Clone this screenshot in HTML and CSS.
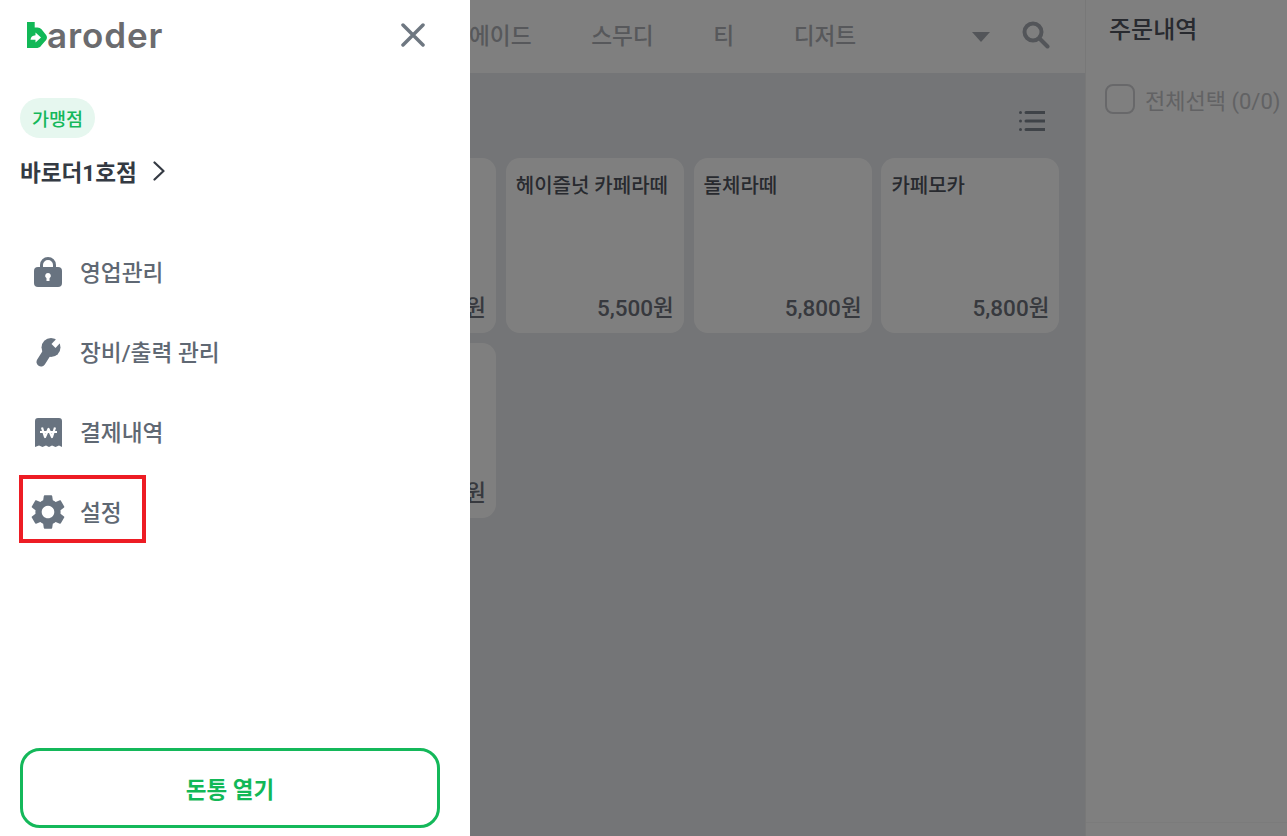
FILE: index.html
```html
<!DOCTYPE html>
<html lang="ko">
<head>
  <meta charset="UTF-8" />
  <meta name="viewport" content="width=device-width, initial-scale=1.0"/>
  <title>baroder POS</title>
  <link rel="stylesheet" href="styles.css">
</head>
<body>

  <div class="app">
    <main class="menu">
      <div class="topbar">
        <div class="tabs">
          <a href="#">에이드</a>
          <a href="#">스무디</a>
          <a href="#">티</a>
          <a href="#">디저트</a>
        </div>
        <div class="topbar-tools">
          <svg class="tab-caret" viewBox="0 0 18 10"><path d="M0 0h18l-9 10z"/></svg>
          <svg class="search-icon" viewBox="0 0 28 28"><circle cx="11" cy="11" r="8.5"/><path d="M17.5 17.5l8 8"/></svg>
        </div>
      </div>

      <div class="toolbar">
        <svg class="list-icon" viewBox="0 0 26 22">
          <circle cx="1.5" cy="2.5" r="1.5"/><circle cx="1.5" cy="11" r="1.5"/><circle cx="1.5" cy="19.5" r="1.5"/>
          <path d="M7 2.5h19M7 11h19M7 19.5h19"/>
        </svg>
      </div>

      <div class="grid">
        <div class="card"><div class="card-name"></div><div class="card-price">5,500원</div></div>
        <div class="card"><div class="card-name">헤이즐넛 카페라떼</div><div class="card-price">5,500원</div></div>
        <div class="card"><div class="card-name">돌체라떼</div><div class="card-price">5,800원</div></div>
        <div class="card"><div class="card-name">카페모카</div><div class="card-price">5,800원</div></div>
        <div class="card"><div class="card-name"></div><div class="card-price">5,800원</div></div>
      </div>
    </main>

    <aside class="orders">
      <h2>주문내역</h2>
      <label class="select-all"><span class="checkbox"></span>전체선택 (0/0)</label>
      <div class="orders-foot"></div>
    </aside>
  </div>

  <div class="scrim"></div>

  <nav class="drawer">
    <div class="drawer-head">
      <div class="logo">
        <svg class="logo-mark" viewBox="0 0 20 26">
          <path d="M0 0h7.700v5.500H10.500q2.500 0 4 1.800l4.600 5.700q1.700 2.500 0 5l-4.600 5.200q-1.500 2.800-4 2.800H0z"/>
          <path class="logo-arrow" d="M8.500 10.500l5.500 5-5.500 5v-2.700H3.500q.3-4.300 5-4.600z"/>
        </svg>
        <span>aroder</span>
      </div>
      <svg class="close-icon" viewBox="0 0 24 24"><path d="M2 2l20 20M22 2L2 22"/></svg>
    </div>

    <span class="badge">가맹점</span>
    <a class="store" href="#">바로더1호점
      <svg viewBox="0 0 12 20"><path d="M1.500 1.500l9 8.500-9 8.500"/></svg>
    </a>

    <div class="nav-list">
      <a class="nav-item" href="#">
        <span class="nav-icon">
          <svg width="28" height="30" viewBox="0 0 28 30">
            <path class="shackle" d="M7.500 12V8a6.500 6.500 0 0 1 13 0v4"/>
            <path d="M4 10h20q4 0 4 4v12q0 4-4 4H4q-4 0-4-4V14q0-4 4-4z"/>
            <path class="cut" d="M14 16a2.800 2.800 0 0 1 1.500 5.200V24h-3v-2.800A2.800 2.800 0 0 1 14 16z"/>
          </svg>
        </span>
        <span class="nav-label">영업관리</span>
      </a>
      <a class="nav-item" href="#">
        <span class="nav-icon">
          <svg width="25" height="29" viewBox="0 0 25 29">
            <path class="wrench-handle" d="M5 24L12 13"/>
            <circle cx="15" cy="9.500" r="9.500"/>
            <path class="wrench-notch" d="M17.500 8L24.500 .5"/>
          </svg>
        </span>
        <span class="nav-label">장비/출력 관리</span>
      </a>
      <a class="nav-item" href="#">
        <span class="nav-icon">
          <svg width="27" height="29" viewBox="0 0 27 29">
            <path d="M3 0h21q3 0 3 3v26l-3-1.500-3.500 1.500-3.500-1.500-3 1.500-3-1.500-3.500 1.500L4 27.500 0 29V3q0-3 3-3z"/>
            <path class="won" d="M5 14h17M7 9.500L10 19l3.500-8 3.500 8 3-9.500"/>
          </svg>
        </span>
        <span class="nav-label">결제내역</span>
      </a>
      <a class="nav-item nav-item-marked" href="#">
        <span class="nav-icon">
          <svg width="42" height="42" viewBox="0 0 24 24">
            <path d="M19.140 12.940c.04-.3.06-.61.06-.94 0-.32-.02-.64-.07-.94l2.030-1.580c.18-.14.23-.41.12-.61l-1.920-3.320c-.12-.22-.37-.29-.59-.22l-2.390.96c-.5-.38-1.030-.7-1.620-.94l-.36-2.540c-.04-.24-.24-.41-.48-.41h-3.840c-.24 0-.43.17-.47.41l-.36 2.540c-.59.24-1.130.57-1.620.94l-2.390-.96c-.22-.08-.47 0-.59.22L2.740 8.870c-.12.21-.08.47.12.61l2.030 1.580c-.05.3-.09.63-.09.94s.02.64.07.94l-2.030 1.580c-.18.14-.23.41-.12.61l1.920 3.320c.12.22.37.29.59.22l2.390-.96c.5.38 1.030.7 1.620.94l.36 2.540c.05.24.24.41.48.41h3.840c.24 0 .44-.17.47-.41l.36-2.540c.59-.24 1.130-.56 1.620-.94l2.390.96c.22.08.47 0 .59-.22l1.920-3.320c.12-.22.07-.47-.12-.61l-2.010-1.580zM12 15.600c-1.980 0-3.600-1.620-3.600-3.600s1.620-3.600 3.600-3.600 3.600 1.620 3.600 3.600-1.620 3.600-3.600 3.600z"/>
          </svg>
        </span>
        <span class="nav-label">설정</span>
      </a>
    </div>

    <button class="cash-btn" type="button">돈통 열기</button>
  </nav>

</body>
</html>
```

FILE: styles.css
```css
*, *::after {
  box-sizing: border-box;
}

html, body {
  height: 100%;
}

body {
  margin: 0;
  overflow: hidden;
  font-family: Roboto, "Noto Sans CJK KR", sans-serif;
  background-color: #ffffff;
}

a {
  text-decoration: none;
  color: inherit;
}

.app {
  display: flex;
  height: 100%;
}

/* menu area behind the drawer */
.menu {
  flex: 0 0 1085px;
  background-color: #e8eaee;
}

.topbar {
  display: flex;
  justify-content: space-between;
  align-items: center;
  height: 73px;
  padding: 0 35px 4px 469px;
  background-color: #ffffff;
}

.tabs {
  display: flex;
  gap: 59.500px;
  font-size: 22.700px;
  font-weight: 500;
  color: #aeb1b6;
}

.topbar-tools {
  display: flex;
  align-items: center;
  gap: 32px;
}

.tab-caret {
  width: 18px;
  height: 10px;
  margin-top: 4px;
  fill: #a6abb2;
}

.search-icon {
  width: 28px;
  height: 28px;
  fill: none;
  stroke: #a6abb2;
  stroke-width: 4;
  stroke-linecap: round;
}

.toolbar {
  display: flex;
  justify-content: flex-end;
  height: 85px;
  padding: 37px 40px 0 0;
}

.list-icon {
  width: 26px;
  height: 22px;
  fill: #7f8791;
  stroke: none;
}

.list-icon path {
  fill: none;
  stroke: #7f8791;
  stroke-width: 3;
  stroke-linecap: round;
}

.grid {
  display: grid;
  grid-template-columns: repeat(4, 178px);
  gap: 10px 9.8px;
  padding-left: 318px;
}

.card {
  display: flex;
  flex-direction: column;
  justify-content: space-between;
  height: 175px;
  padding: 12px 10px 11px;
  border-radius: 14px;
  background-color: #ffffff;
}

.card-name {
  font-size: 20px;
  font-weight: 500;
  color: #50545e;
}

.card-price {
  text-align: right;
  font-size: 22.5px;
  font-weight: 500;
  color: #6e727c;
}

/* order list on the right */
.orders {
  flex: 1;
  display: flex;
  flex-direction: column;
  padding: 10px 0 0 23px;
  border-left: 1px solid #f0f0f0;
  background-color: #ffffff;
}

.orders h2 {
  margin: 0 0 38px;
  font-size: 24px;
  font-weight: 500;
  color: #50545e;
}

.select-all {
  display: flex;
  align-items: center;
  gap: 10px;
  white-space: nowrap;
  font-size: 22px;
  color: #c4c5c8;
}

.checkbox {
  width: 30px;
  height: 30px;
  margin-left: -4px;
  border: 2px solid #d0d1d4;
  border-radius: 8px;
}

.orders-foot {
  height: 14px;
  margin: auto 0 0 -23px;
  border-top: 1px solid #f6f6f6;
}

.scrim {
  position: absolute;
  inset: 0;
  background-color: rgba(0, 0, 0, 0.5);
}

/* left drawer */
.drawer {
  position: absolute;
  top: 0;
  left: 0;
  bottom: 0;
  display: flex;
  flex-direction: column;
  align-items: flex-start;
  width: 470px;
  padding: 0 30px 8px 20px;
  background-color: #ffffff;
}

.drawer-head {
  display: flex;
  justify-content: space-between;
  align-items: center;
  align-self: stretch;
  height: 70px;
  margin-bottom: 28px;
  padding: 0 15px 0 7px;
}

.logo {
  display: flex;
  align-items: flex-end;
  height: 26px;
  font-family: Inter, sans-serif;
  font-size: 35px;
  font-weight: 600;
  line-height: 26px;
  letter-spacing: 0.9px;
  color: #6b6b6e;
}

.logo-mark {
  flex: none;
  width: 20px;
  height: 26px;
  fill: #12b857;
}

.logo-arrow {
  fill: #ffffff;
}

.close-icon {
  width: 24px;
  height: 24px;
  fill: none;
  stroke: #6e7781;
  stroke-width: 3.500;
  stroke-linecap: round;
}

.badge {
  display: flex;
  align-items: center;
  justify-content: center;
  width: 75px;
  height: 40px;
  border-radius: 20px;
  background-color: #e6f7ef;
  font-size: 18.500px;
  font-weight: 500;
  color: #14b85a;
}

.store {
  display: flex;
  align-items: center;
  gap: 16px;
  height: 32px;
  margin-top: 17px;
  margin-bottom: 1px;
  font-size: 22.600px;
  font-weight: 700;
  color: #343a43;
}

.store svg {
  width: 12px;
  height: 20px;
  fill: none;
  stroke: #343a43;
  stroke-width: 2.200;
  stroke-linecap: round;
  stroke-linejoin: round;
}

.nav-list {
  display: flex;
  flex-direction: column;
  margin-top: 44px;
}

.nav-item {
  position: relative;
  display: flex;
  align-items: center;
  gap: 4px;
  height: 80px;
  font-size: 22.700px;
  font-weight: 500;
  color: #5f6873;
}

.nav-icon {
  display: flex;
  align-items: center;
  justify-content: center;
  width: 56px;
  height: 42px;
}

.nav-icon svg {
  fill: #687380;
}

.nav-label {
  padding-bottom: 1px;
}

.shackle {
  fill: none;
  stroke: #687380;
  stroke-width: 3;
}

.cut {
  fill: #ffffff;
}

.wrench-handle {
  fill: none;
  stroke: #687380;
  stroke-width: 9;
  stroke-linecap: round;
}

.wrench-notch {
  fill: none;
  stroke: #ffffff;
  stroke-width: 5.500;
}

.won {
  fill: none;
  stroke: #ffffff;
  stroke-width: 2.200;
  stroke-linejoin: round;
}

/* red callout box from the manual */
.nav-item-marked::after {
  content: "";
  position: absolute;
  top: 3px;
  left: -1px;
  width: 127px;
  height: 68px;
  border: 4px solid #ed1c24;
}

.cash-btn {
  align-self: stretch;
  height: 80px;
  margin-top: auto;
  border: 3px solid #14b85a;
  border-radius: 20px;
  background-color: #ffffff;
  font-family: inherit;
  font-size: 22.500px;
  font-weight: 700;
  color: #12b857;
  cursor: pointer;
}
```
